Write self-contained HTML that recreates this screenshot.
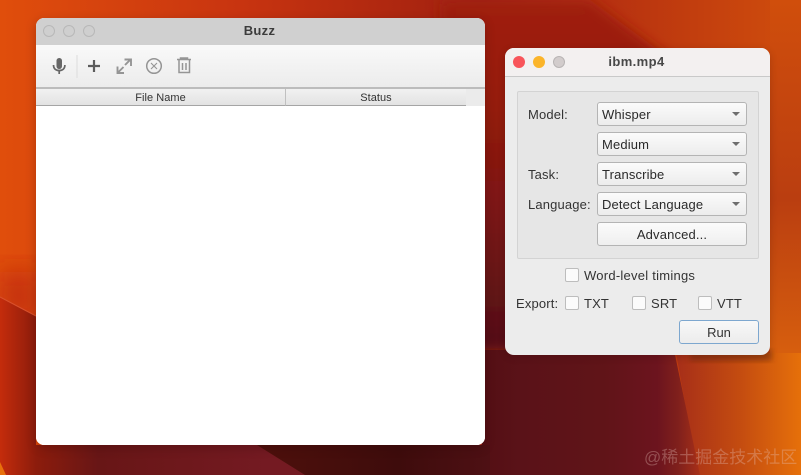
<!DOCTYPE html>
<html><head><meta charset="utf-8">
<style>
html,body{margin:0;padding:0;width:801px;height:475px;overflow:hidden;font-family:"Liberation Sans","DejaVu Sans",sans-serif;color:#2a2a2a}
#root{position:relative;width:801px;height:475px;overflow:hidden}
#bg{position:absolute;left:0;top:0;display:block}
.abs{position:absolute}
.win1{position:absolute;left:36px;top:18px;width:449px;height:427px;border-radius:8px;overflow:hidden;background:#fff;box-shadow:0 3px 10px rgba(40,0,0,.25)}
.tb{position:absolute;left:0;top:0;width:449px;height:27px;background:#d0d0d0}
.dot{position:absolute;width:12px;height:12px;border-radius:50%;box-sizing:border-box}
.tool{position:absolute;left:0;top:27px;width:449px;height:42px;background:linear-gradient(#f9f9f9,#ececec)}
.head{position:absolute;left:0;top:69px;width:449px;height:19px;background:#ebebeb;border-top:2px solid #bcbcbc;box-sizing:border-box}
.hl{position:absolute;top:71px;height:16px;font-size:11px;line-height:18px;letter-spacing:.05px;text-align:center;background:linear-gradient(#f1f1f1,#e3e3e3);border-bottom:1px solid #a5a5a5;color:#333}
.win2{position:absolute;left:505px;top:48px;width:265px;height:307px;border-radius:9px;overflow:hidden;background:#ececec;box-shadow:0 2px 8px rgba(40,0,0,.2)}
.t2{position:absolute;left:0;top:0;width:265px;height:28px;background:#f3f0f0;border-bottom:1px solid #c9c9c9}
.lab{position:absolute;font-size:13px;line-height:16px;white-space:nowrap;color:#333;letter-spacing:.15px}
.combo{position:absolute;left:92px;width:150px;height:24px;box-sizing:border-box;border:1px solid #b4b4b4;border-radius:3px;background:linear-gradient(#fbfbfb,#ececec);font-size:13px;line-height:24px;letter-spacing:.15px;padding-left:4px;color:#2a2a2a}
.combo.arr:after{content:"";position:absolute;right:6px;top:9px;border-left:4px solid transparent;border-right:4px solid transparent;border-top:4px solid #6e6e6e}
.chk{position:absolute;width:14px;height:14px;box-sizing:border-box;background:#fbfbfb;border:1px solid #bdbdbd;border-radius:2px}
</style></head><body>
<div id="root">
<svg id="bg" width="801" height="475" viewBox="0 0 801 475">
<defs>
<linearGradient id="a" gradientUnits="userSpaceOnUse" x1="0" y1="0" x2="801" y2="0"><stop offset="0" stop-color="#e04e0c"/><stop offset=".3" stop-color="#c83410"/><stop offset=".6" stop-color="#a02010"/><stop offset=".75" stop-color="#b63010"/><stop offset="1" stop-color="#d04e0c"/></linearGradient>
<linearGradient id="h" gradientUnits="userSpaceOnUse" x1="0" y1="0" x2="0" y2="475"><stop offset="0" stop-color="#a02010"/><stop offset=".21" stop-color="#961c10"/><stop offset=".42" stop-color="#7e1612"/><stop offset=".63" stop-color="#601216"/><stop offset=".75" stop-color="#520f14"/><stop offset="1" stop-color="#641518"/></linearGradient>
<linearGradient id="low" gradientUnits="userSpaceOnUse" x1="485" y1="0" x2="700" y2="0"><stop offset="0" stop-color="#540f14"/><stop offset=".16" stop-color="#5a1218"/><stop offset=".55" stop-color="#601418"/><stop offset=".8" stop-color="#6c141e"/><stop offset=".9" stop-color="#80201c"/><stop offset="1" stop-color="#a83018"/></linearGradient>
<linearGradient id="s" x1="0" y1="0" x2="0" y2="1"><stop offset="0" stop-color="#d04e0c"/><stop offset=".55" stop-color="#ba3e10"/><stop offset="1" stop-color="#d8600e"/></linearGradient>
<linearGradient id="f" gradientUnits="userSpaceOnUse" x1="680" y1="0" x2="801" y2="0"><stop offset="0" stop-color="#a83018"/><stop offset=".5" stop-color="#c44c10"/><stop offset="1" stop-color="#e6700a"/></linearGradient>
<linearGradient id="d" gradientUnits="userSpaceOnUse" x1="0" y1="0" x2="490" y2="0"><stop offset="0" stop-color="#c42c0c"/><stop offset=".074" stop-color="#8c1c0c"/><stop offset=".2" stop-color="#681616"/><stop offset=".55" stop-color="#741a22"/><stop offset="1" stop-color="#741a22"/></linearGradient>
<linearGradient id="k" gradientUnits="userSpaceOnUse" x1="260" y1="0" x2="490" y2="0"><stop offset="0" stop-color="#4e100c"/><stop offset=".6" stop-color="#3e0c0c"/><stop offset="1" stop-color="#4e1014"/></linearGradient>
<filter id="bl" x="-30%" y="-30%" width="160%" height="160%"><feGaussianBlur stdDeviation="14"/></filter>
<filter id="bm" x="-30%" y="-30%" width="160%" height="160%"><feGaussianBlur stdDeviation="6"/></filter>
<filter id="bs" x="-20%" y="-20%" width="140%" height="140%"><feGaussianBlur stdDeviation="3"/></filter>
</defs>
<rect width="801" height="475" fill="url(#a)"/>
<rect x="770" y="0" width="31" height="362" fill="url(#s)"/>
<path d="M0 272 H36 V330 L0 310Z" fill="#b62410" opacity=".7" filter="url(#bl)"/>
<path d="M676 353H801V475H698Z" fill="url(#f)"/>
<path d="M440 0H590L672 60V352H440Z" fill="url(#h)" filter="url(#bm)"/>
<path d="M482 350H674L700 475H482Z" fill="url(#low)"/>
<path d="M690 350H772V361H690Z" fill="#6e2a10" opacity=".5" filter="url(#bs)"/>
<path d="M0 297 L36 316 V445 H490 V475 H0Z" fill="url(#d)"/>
<path d="M0 297 L36 316" stroke="#d8502c" stroke-width="1" fill="none"/>
<path d="M0 462 L6 475 L0 475Z" fill="#e8700c"/>
<path d="M257 445 L305 475 H490 V445Z" fill="url(#k)"/>
</svg>

<div class="win1">
  <div class="tb"></div>
  <div class="dot" style="left:7px;top:7px;background:#cfcfcf;border:1px solid #b8b8b8"></div>
  <div class="dot" style="left:27px;top:7px;background:#cfcfcf;border:1px solid #b8b8b8"></div>
  <div class="dot" style="left:47px;top:7px;background:#cfcfcf;border:1px solid #b8b8b8"></div>
  <div class="abs" style="left:0;top:5px;width:447px;text-align:center;font-size:13px;font-weight:bold;line-height:16px;letter-spacing:.3px;color:#3c3c3c">Buzz</div>
  <div class="tool"></div>
  <svg class="abs" style="left:0;top:27px" width="200" height="43" viewBox="36 45 200 43">
    <rect x="56.500" y="58" width="5.500" height="11" rx="2.700" fill="#666"/>
    <path d="M53.500 65c0 3.800 2.500 5.500 5.700 5.500s5.700-1.700 5.700-5.500M59.200 70.500v3.500" fill="none" stroke="#666" stroke-width="1.700"/>
    <path d="M77 55v23" stroke="#dcdcdc" stroke-width="1"/>
    <path d="M94 60v12M88 66h12" stroke="#5c5c5c" stroke-width="2.200"/>
    <path d="M117.500 66.500v6.500h6.500M118 72.500l5.500-5.500M125 65l5.500-5.500M124.500 59.500h6.500v6.500" fill="none" stroke="#959595" stroke-width="1.900"/>
    <circle cx="154" cy="66" r="7.300" fill="none" stroke="#959595" stroke-width="1.500"/>
    <path d="M151 63l6 6M157 63l-6 6" stroke="#959595" stroke-width="1.100"/>
    <path d="M177 59.500h14M180.500 59v-1h7v1M179 60v12.500h10.500V60M182.500 63v7M186 63v7" fill="none" stroke="#959595" stroke-width="1.500"/>
  </svg>
  <div class="head"></div>
  <div class="hl" style="left:0;width:249px;border-right:1px solid #c0c0c0">File Name</div>
  <div class="hl" style="left:250px;width:180px">Status</div>
  <div class="abs" style="left:0;top:88px;width:449px;height:339px;background:#fff"></div>
</div>

<div class="win2">
  <div class="t2"></div>
  <div class="dot" style="left:8px;top:8px;background:#f8545a"></div>
  <div class="dot" style="left:28px;top:8px;background:#fbb42a"></div>
  <div class="dot" style="left:48px;top:8px;background:#d2cccc;border:1px solid #b8b4b4"></div>
  <div class="abs" style="left:0;top:6px;width:263px;text-align:center;font-size:13px;font-weight:bold;line-height:16px;letter-spacing:.4px;color:#484848">ibm.mp4</div>
  <div class="abs" style="left:12px;top:43px;width:242px;height:168px;box-sizing:border-box;background:#e6e6e6;border:1px solid #d3d3d3;border-radius:2px"></div>
  <div class="lab" style="left:23px;top:59px">Model:</div>
  <div class="combo arr" style="top:54px">Whisper</div>
  <div class="combo arr" style="top:84px">Medium</div>
  <div class="lab" style="left:23px;top:119px">Task:</div>
  <div class="combo arr" style="top:114px">Transcribe</div>
  <div class="lab" style="left:23px;top:149px">Language:</div>
  <div class="combo arr" style="top:144px">Detect Language</div>
  <div class="combo" style="top:174px;text-align:center;padding:0;background:linear-gradient(#fbfbfb,#efefef)">Advanced...</div>
  <div class="chk" style="left:60px;top:220px"></div>
  <div class="lab" style="left:79px;top:220px;letter-spacing:.25px">Word-level timings</div>
  <div class="lab" style="left:11px;top:248px">Export:</div>
  <div class="chk" style="left:60px;top:248px"></div>
  <div class="lab" style="left:79px;top:248px">TXT</div>
  <div class="chk" style="left:127px;top:248px"></div>
  <div class="lab" style="left:146px;top:248px">SRT</div>
  <div class="chk" style="left:193px;top:248px"></div>
  <div class="lab" style="left:212px;top:248px">VTT</div>
  <div class="abs" style="left:174px;top:272px;width:80px;height:24px;box-sizing:border-box;border:1px solid #7da7cf;border-radius:3px;background:linear-gradient(#f8f8f8,#ececec);text-align:center;font-size:13px;line-height:23px;color:#333">Run</div>
</div>
<div class="abs" style="left:644px;top:448px;font-size:17px;line-height:20px;white-space:nowrap;color:rgba(230,195,185,.33);font-family:'Liberation Sans','Noto Sans CJK SC',sans-serif">@稀土掘金技术社区</div>
</div>
</body></html>
